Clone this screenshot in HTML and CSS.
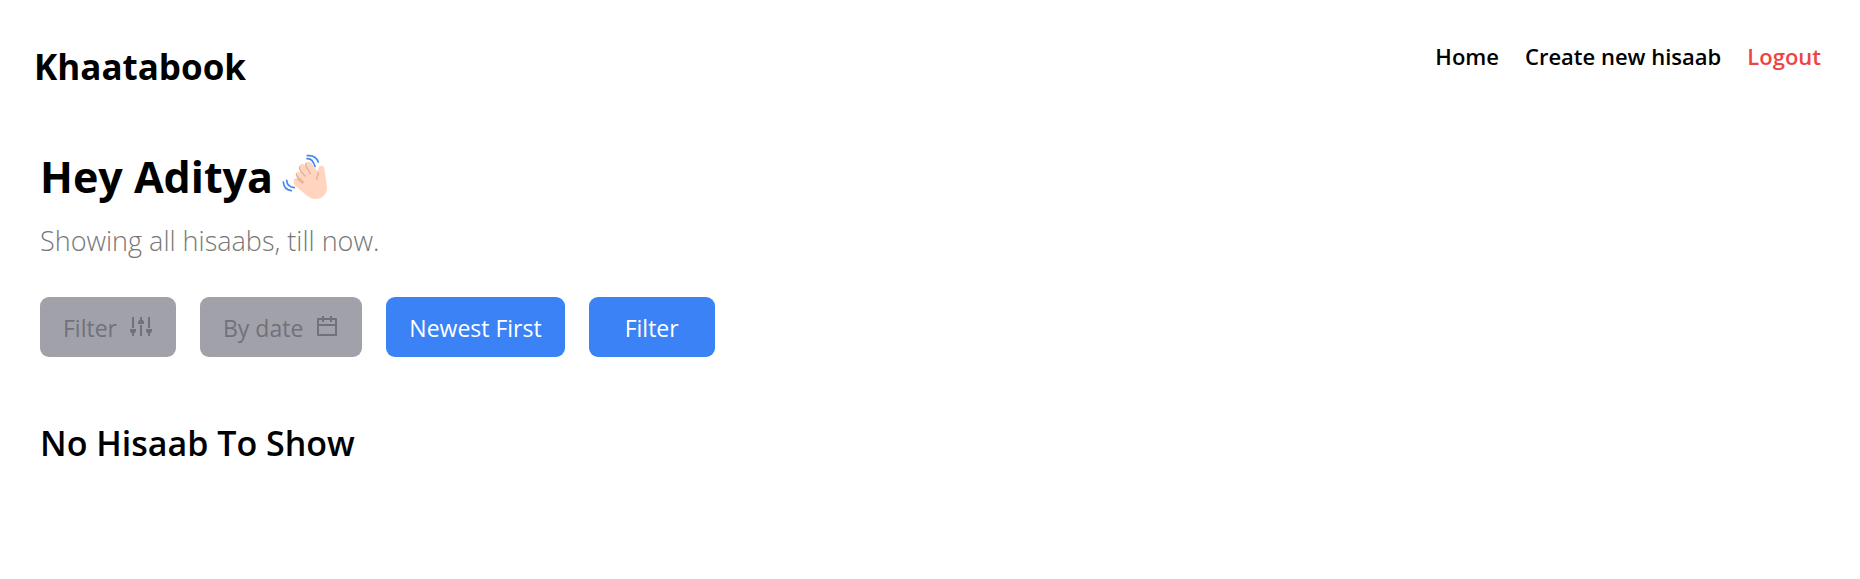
FILE: index.html
```html
<!DOCTYPE html>
<html lang="en">
<head>
<meta charset="utf-8">
<meta name="viewport" content="width=device-width, initial-scale=1">
<title>Khaatabook</title>
<link rel="stylesheet" href="styles.css">
</head>
<body>
<header class="header">
  <h1 class="logo">Khaatabook</h1>
  <nav class="nav">
    <a class="nav-link" href="#">Home</a>
    <a class="nav-link" href="#">Create new hisaab</a>
    <a class="nav-link nav-link-danger" href="#">Logout</a>
  </nav>
</header>
<main class="main">
  <h2 class="greeting">
    <span>Hey Aditya</span>
    <svg class="wave" viewBox="36 27 138 138" fill="none" stroke-linecap="round" aria-hidden="true">
      <path fill="#ffd5c0" d="M72 112 C68 104 75 98 82 102 L79 93 C75 84 84 76 91 83 L89 73 C85 62 95 52 104 60 C106 50 119 47 125 55 L143 80 L145 70 C147 60 163 60 163 71 L167 97 L171 126 C172 149 155 162 135 162 C121 161 113 154 105 147 L77 123 C72 119 70 116 72 112 Z"/>
      <path stroke="#e6b096" stroke-width="4" d="M82 102 L97 114 M79 87 Q79 93 84 97 L100 111 M89 65 Q87 71 91 77 L105 93 M108 56 Q106 60 109 65 L121 86 M144 82 L145 90 Q139 94 141 103"/>
      <path stroke="#4286f5" stroke-width="5" d="M112 32 Q136 29 145 51 M111 41 Q127 39 135 64 M40 111 Q42 134 64 137 M50 106 Q51 126 73 128"/>
    </svg>
  </h2>
  <p class="subtitle">Showing all hisaabs, till now.</p>
  <div class="filters">
    <button class="btn btn-muted" type="button">
      <span>Filter</span>
      <svg class="icon" viewBox="0 0 24 24" fill="none" stroke="currentColor" stroke-width="2" aria-hidden="true">
        <path d="M4 1v11M4 16v4M12 1v4M12 9v11M20 1v11M20 16v4"/>
        <path fill="currentColor" stroke="none" d="M1 13h6v2l-1 2H2l-1-2zM9 6l1-2h4l1 2v2H9zM17 13h6v2l-1 2h-4l-1-2z"/>
      </svg>
    </button>
    <button class="btn btn-muted" type="button">
      <span>By date</span>
      <svg class="icon" viewBox="0 1 24 24" fill="currentColor" aria-hidden="true">
        <path d="M9 1v2h6V1h2v2h4a1 1 0 0 1 1 1v16a1 1 0 0 1-1 1H3a1 1 0 0 1-1-1V4a1 1 0 0 1 1-1h4V1h2zm11 10H4v8h16v-8zM7 5H4v4h16V5h-3v2h-2V5H9v2H7V5z"/>
      </svg>
    </button>
    <button class="btn btn-primary" type="button">Newest First</button>
    <button class="btn btn-primary btn-wide" type="button">Filter</button>
  </div>
  <h3 class="empty">No Hisaab To Show</h3>
</main>
</body>
</html>
```
FILE: styles.css
```css
* {
  box-sizing: border-box;
  margin: 0;
}

body {
  background: #fff;
  color: #000;
  font-family: "Segoe UI", "Open Sans", "Noto Sans", sans-serif;
}

.header {
  display: flex;
  justify-content: space-between;
  align-items: flex-start;
  padding: 39px 39px 0 34px;
}

.logo {
  font-size: 35px;
  font-weight: 700;
  line-height: 56px;
}

.nav {
  display: flex;
  gap: 26px;
}

.nav-link {
  color: inherit;
  font-size: 22px;
  font-weight: 600;
  line-height: 34px;
  text-decoration: none;
}

.nav-link-danger {
  color: #ef4444;
}

.main {
  padding: 54px 40px 0;
}

.greeting {
  display: flex;
  align-items: center;
  gap: 9px;
  font-size: 43px;
  font-weight: 700;
  line-height: 56px;
}

.wave {
  width: 46px;
  height: 46px;
}

.subtitle {
  margin-top: 18px;
  color: #777;
  font-size: 27px;
  font-weight: 300;
  line-height: 36px;
}

.filters {
  display: flex;
  gap: 24px;
  margin-top: 38px;
}

.btn {
  display: flex;
  justify-content: center;
  align-items: center;
  gap: 12px;
  height: 60px;
  padding: 2px 23px 0;
  border: 0;
  border-radius: 9px;
  font-family: inherit;
  font-size: 23px;
}

.btn-muted {
  background: #a1a1aa;
  color: #71717a;
}

.btn-primary {
  background: #3b82f6;
  color: #fff;
}

.btn-wide {
  padding: 2px 36px 0;
}

.icon {
  width: 24px;
  height: 24px;
}

.empty {
  margin-top: 59px;
  font-size: 34px;
  font-weight: 600;
  line-height: 54px;
}
```
